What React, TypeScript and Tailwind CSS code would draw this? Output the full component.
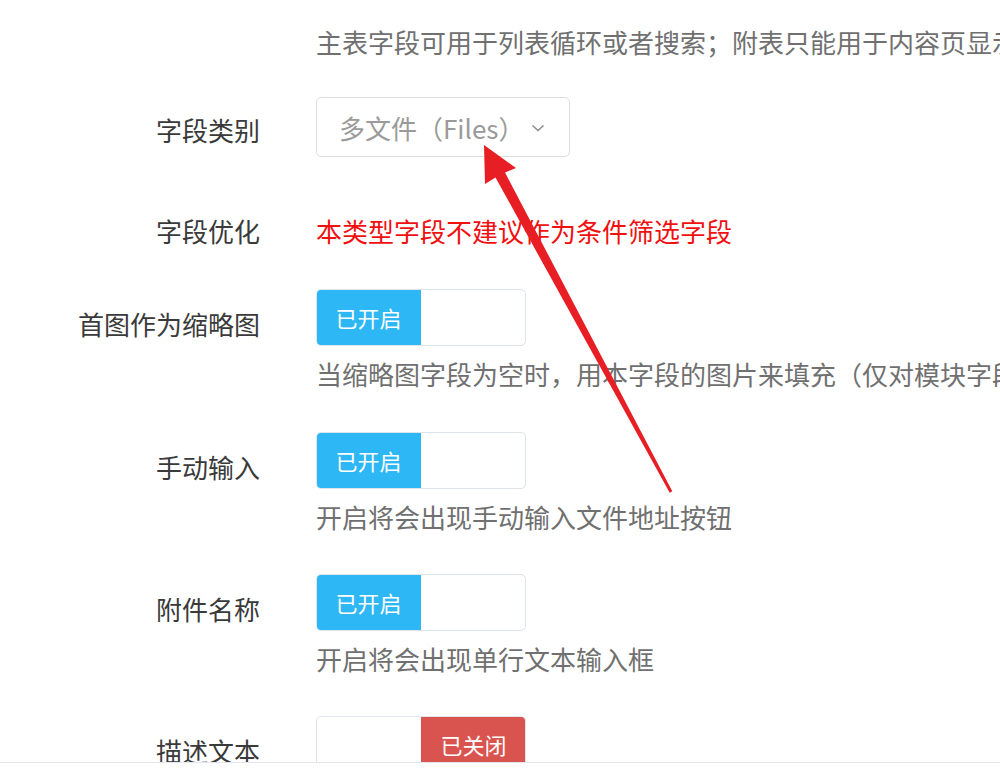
import React from "react";

interface IRowProps {
    label?: string;
    labelPt?: string;
    className?: string;
    children?: React.ReactNode;
}

const Row = ({ label, labelPt = "pt-0", className = "", children }: IRowProps) => {
    return (
        <div className={`flex ${className}`}>
            <div className={`w-[260px] shrink-0 text-right text-[26px] leading-[36px] text-[#3a3a3a] whitespace-nowrap ${labelPt}`}>
                {label}
            </div>
            <div className="ml-[56px] min-w-0">{children}</div>
        </div>
    );
};

const Help = ({ text }: { text: string }) => (
    <div className="mt-[10px] text-[26px] leading-[36px] text-[#707070] whitespace-nowrap">{text}</div>
);

const Toggle = ({ on }: { on: boolean }) => (
    <div className="flex h-[57px] w-[210px] rounded-[5px] border border-[#dfe3ea] overflow-hidden bg-white">
        {on ? (
            <>
                <div className="w-[105px] -ml-px -my-px bg-[#2db7f5] text-white text-[22px] flex items-center justify-center">已开启</div>
                <div className="flex-1" />
            </>
        ) : (
            <>
                <div className="flex-1" />
                <div className="w-[105px] -mr-px -my-px bg-[#d9534f] text-white text-[22px] flex items-center justify-center">已关闭</div>
            </>
        )}
    </div>
);

export default function App() {
    return (
        <div className="relative w-[1000px] h-[782px] overflow-hidden flex flex-col bg-white font-['Noto_Sans_CJK_SC','Noto_Sans',sans-serif]">
            <div className="flex-1 overflow-hidden pt-[24px]">
                <Row>
                    <div className="text-[26px] leading-[36px] text-[#707070] whitespace-nowrap">
                        主表字段可用于列表循环或者搜索；附表只能用于内容页显示
                    </div>
                </Row>

                <Row label="字段类别" labelPt="pt-[15px]" className="mt-[37px]">
                    <div className="flex items-center h-[60px] w-[254px] rounded-[5px] border border-[#dcdee2] pl-[22px] pr-[24px]">
                        <span className="text-[26px] text-[#9a9a9a] whitespace-nowrap">多文件（Files）</span>
                        <svg className="ml-auto mt-[2px]" width="14" height="8" viewBox="0 0 14 8" fill="none">
                            <path d="M1.5 1.5 L7 6.5 L12.5 1.5" stroke="#8a8a8a" strokeWidth="1.5" />
                        </svg>
                    </div>
                </Row>

                <Row label="字段优化" className="mt-[56px]">
                    <div className="text-[26px] leading-[36px] text-[#f01010] whitespace-nowrap">本类型字段不建议作为条件筛选字段</div>
                </Row>

                <Row label="首图作为缩略图" labelPt="pt-[17px]" className="mt-[40px]">
                    <Toggle on />
                    <Help text="当缩略图字段为空时，用本字段的图片来填充（仅对模块字段有效）" />
                </Row>

                <Row label="手动输入" labelPt="pt-[17px]" className="mt-[40px]">
                    <Toggle on />
                    <Help text="开启将会出现手动输入文件地址按钮" />
                </Row>

                <Row label="附件名称" labelPt="pt-[17px]" className="mt-[39px]">
                    <Toggle on />
                    <Help text="开启将会出现单行文本输入框" />
                </Row>

                <Row label="描述文本" labelPt="pt-[17px]" className="mt-[39px]">
                    <Toggle on={false} />
                </Row>
            </div>
            <div className="h-[20px] shrink-0 border-t border-[#e3e6ee] bg-white" />

            {/* annotation arrow */}
            <svg className="absolute left-0 top-0 pointer-events-none" width="1000" height="782">
                <polygon
                    points="484,145 516,168 505,172.5 672.3,491.3 669.7,492.7 495.5,177.5 485,184"
                    fill="#e81e25"
                />
            </svg>
        </div>
    );
}
